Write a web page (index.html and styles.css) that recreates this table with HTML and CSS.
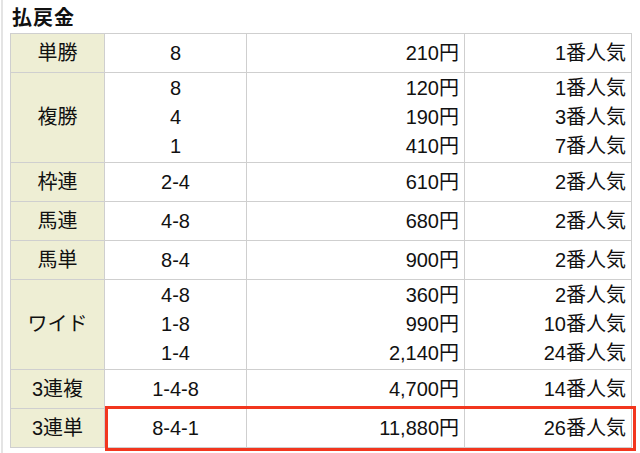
FILE: index.html
```html
<!DOCTYPE html>
<html lang="ja">
<head>
<meta charset="utf-8">
<link rel="stylesheet" href="styles.css">
</head>
<body>
<div class="page">
  <h2 class="title">払戻金</h2>
  <table class="payout">
    <colgroup><col class="c1"><col class="c2"><col class="c3"><col class="c4"></colgroup>
    <tr class="single"><th>単勝</th><td class="num">8</td><td class="amt">210円</td><td class="pop">1番人気</td></tr>
    <tr class="multi"><th>複勝</th><td class="num">8<br>4<br>1</td><td class="amt">120円<br>190円<br>410円</td><td class="pop">1番人気<br>3番人気<br>7番人気</td></tr>
    <tr class="single"><th>枠連</th><td class="num">2-4</td><td class="amt">610円</td><td class="pop">2番人気</td></tr>
    <tr class="single"><th>馬連</th><td class="num">4-8</td><td class="amt">680円</td><td class="pop">2番人気</td></tr>
    <tr class="single"><th>馬単</th><td class="num">8-4</td><td class="amt">900円</td><td class="pop">2番人気</td></tr>
    <tr class="multi"><th>ワイド</th><td class="num">4-8<br>1-8<br>1-4</td><td class="amt">360円<br>990円<br>2,140円</td><td class="pop">2番人気<br>10番人気<br>24番人気</td></tr>
    <tr class="single"><th>3連複</th><td class="num">1-4-8</td><td class="amt">4,700円</td><td class="pop">14番人気</td></tr>
    <tr class="single hl"><th>3連単</th><td class="num">8-4-1</td><td class="amt">11,880円</td><td class="pop">26番人気<span class="mark"></span></td></tr>
  </table>
</div>
</body>
</html>
```
FILE: styles.css
```css
html, body { margin: 0; padding: 0; background: #fff; }
body {
  font-family: "Liberation Sans", "Noto Sans CJK JP", sans-serif;
  color: #111;
}
.page {
  width: 640px;
  height: 453px;
  box-sizing: border-box;
  border-left: 2px solid #e4e4e4;
  margin-left: 1px;
  padding: 4px 0 0 7px;
  overflow: hidden;
}
.title {
  margin: 0 0 4px 2px;
  font-size: 20px;
  line-height: 25px;
  font-weight: bold;
  font-family: "Noto Sans CJK JP", sans-serif;
  letter-spacing: 1px;
}
.payout {
  border-collapse: collapse;
  width: 622px;
  font-size: 20px;
  position: relative;
}
.c1 { width: 94px; }
.c2 { width: 142px; }
.c3 { width: 218px; }
.c4 { width: 167px; }
.payout th, .payout td {
  border: 1px solid #cfcfcf;
  padding: 1px 5px 0 5px;
  line-height: 29px;
  vertical-align: middle;
  white-space: nowrap;
}
.payout th {
  background: #eeeed4;
  font-weight: normal;
  text-align: center;
  padding-top: 0;
}
.single th, .single td { height: 39px; box-sizing: border-box; }
.multi th, .multi td { padding-bottom: 1px; }
.num { text-align: center; }
.amt { text-align: right; }
.pop { text-align: right; position: relative; }
.mark {
  position: absolute;
  right: -5px;
  top: -3px;
  width: 525px;
  height: 39px;
  border: 3px solid #f2361e;
  pointer-events: none;
}
```
